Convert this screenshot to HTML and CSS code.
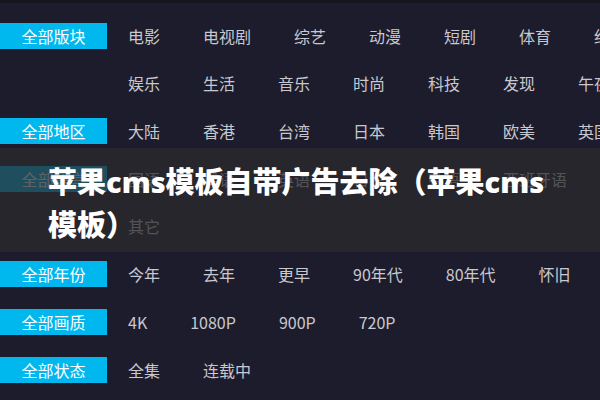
FILE: index.html
```html
<!DOCTYPE html>
<html lang="zh-CN">
<head>
<meta charset="utf-8">
<title>苹果cms模板自带广告去除</title>
<link rel="stylesheet" href="styles.css">
</head>
<body>
<div class="page">
  <div class="group">
    <div class="label">全部版块</div>
    <div class="lines">
      <div class="line"><span>电影</span><span>电视剧</span><span>综艺</span><span>动漫</span><span>短剧</span><span>体育</span><span>纪录片</span></div>
      <div class="line"><span>娱乐</span><span>生活</span><span>音乐</span><span>时尚</span><span>科技</span><span>发现</span><span>午夜</span></div>
    </div>
  </div>
  <div class="group">
    <div class="label">全部地区</div>
    <div class="lines">
      <div class="line"><span>大陆</span><span>香港</span><span>台湾</span><span>日本</span><span>韩国</span><span>欧美</span><span>英国</span></div>
    </div>
  </div>
  <div class="group">
    <div class="label">全部语言</div>
    <div class="lines">
      <div class="line"><span>国语</span><span>粤语</span><span>英语</span><span>日语</span><span>韩语</span><span>西班牙语</span></div>
      <div class="line"><span>其它</span></div>
    </div>
  </div>
  <div class="group">
    <div class="label">全部年份</div>
    <div class="lines">
      <div class="line"><span>今年</span><span>去年</span><span>更早</span><span>90年代</span><span>80年代</span><span>怀旧</span></div>
    </div>
  </div>
  <div class="group">
    <div class="label">全部画质</div>
    <div class="lines">
      <div class="line"><span>4K</span><span>1080P</span><span>900P</span><span>720P</span></div>
    </div>
  </div>
  <div class="group">
    <div class="label">全部状态</div>
    <div class="lines">
      <div class="line"><span>全集</span><span>连载中</span></div>
    </div>
  </div>

  <div class="banner">
    <h1 class="title">苹果cms模板自带广告去除（苹果cms模板）</h1>
  </div>
</div>
</body>
</html>
```

FILE: styles.css
```css
html, body {
  margin: 0;
  padding: 0;
  width: 600px;
  height: 400px;
  overflow: hidden;
  background: #1d1c2c;
}

.page {
  position: relative;
  width: 760px;
  height: 397px;
  border-top: 3px solid #15141f;
  padding-top: 20px;
  box-sizing: border-box;
  font-family: "Microsoft YaHei", "Noto Sans CJK SC", sans-serif;
  font-size: 16px;
}

.group {
  display: flex;
  align-items: flex-start;
  margin-bottom: 22px;
}

.label {
  width: 107px;
  height: 26px;
  line-height: 26px;
  background: #00b7ee;
  color: #ffffff;
  text-align: center;
  flex-shrink: 0;
}

.lines {
  margin-left: 21px;
  display: flex;
  flex-direction: column;
  row-gap: 21px;
}

.line {
  display: flex;
  gap: 43px;
  height: 26px;
  line-height: 26px;
  color: #c8c8d0;
  white-space: nowrap;
}

.banner {
  position: absolute;
  left: 0;
  top: 145px;
  width: 600px;
  height: 104px;
  background: rgba(42, 42, 44, 0.74);
  box-sizing: border-box;
  padding: 12px 0 0 48px;
}

.title {
  margin: 0;
  width: 505px;
  font-family: "Noto Sans", "Noto Sans CJK SC", sans-serif;
  font-size: 29px;
  font-weight: 900;
  line-height: 43px;
  color: #ffffff;
}
```
